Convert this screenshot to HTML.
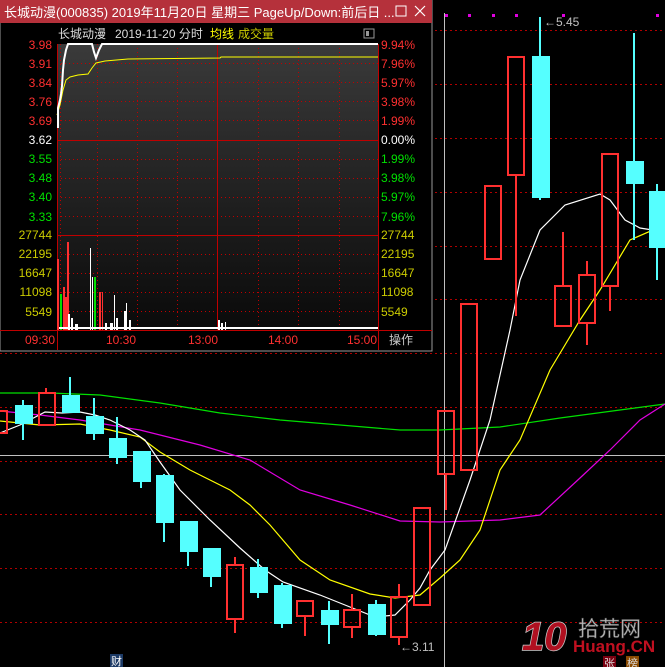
<!DOCTYPE html>
<html><head><meta charset="utf-8"><style>
html,body{margin:0;padding:0;background:#000;width:665px;height:667px;overflow:hidden}
svg{display:block}
text{font-family:"Liberation Sans","Noto Sans CJK SC",sans-serif}
</style></head><body>
<svg width="665" height="667" viewBox="0 0 665 667" xmlns="http://www.w3.org/2000/svg">
<rect width="665" height="667" fill="#000"/>
<g stroke="#b00000" stroke-dasharray="2,3" stroke-width="1">
<line x1="0" y1="30.5" x2="665" y2="30.5"/><line x1="0" y1="84.5" x2="665" y2="84.5"/>
<line x1="0" y1="138.5" x2="665" y2="138.5"/><line x1="0" y1="192.5" x2="665" y2="192.5"/>
<line x1="0" y1="246.5" x2="665" y2="246.5"/><line x1="0" y1="299.5" x2="665" y2="299.5"/>
<line x1="0" y1="353.5" x2="665" y2="353.5"/><line x1="0" y1="407.5" x2="665" y2="407.5"/>
<line x1="0" y1="461.5" x2="665" y2="461.5"/><line x1="0" y1="514.5" x2="665" y2="514.5"/>
<line x1="0" y1="568.5" x2="665" y2="568.5"/><line x1="0" y1="622.5" x2="665" y2="622.5"/>
</g>
<line x1="0" y1="455.5" x2="665" y2="455.5" stroke="#c0c0c0"/>
<line x1="444.5" y1="13" x2="444.5" y2="667" stroke="#c0c0c0"/>
<g fill="#e000e0"><rect x="445" y="14" width="3" height="3"/><rect x="468" y="14" width="3" height="3"/><rect x="492" y="14" width="3" height="3"/><rect x="515" y="14" width="3" height="3"/><rect x="562" y="14" width="3" height="3"/><rect x="656" y="14" width="3" height="3"/></g>
<!-- MA lines -->
<polyline fill="none" stroke="#00e000" stroke-width="1.2" points="0,393 50,393 100,395 160,403 220,413 280,420 340,425 400,430 440,430 500,427 560,418 620,410 665,404"/>
<polyline fill="none" stroke="#e000e0" stroke-width="1.2" points="0,411 40,415 80,420 140,430 200,445 250,460 300,490 350,505 400,521 440,522 500,520 540,515 580,478 610,450 640,420 665,404"/>
<polyline fill="none" stroke="#ffff00" stroke-width="1.2" points="0,421 40,425 80,424 110,430 140,437 160,452 190,470 230,490 250,505 270,525 300,560 330,580 370,594 395,598 420,595 440,578 460,560 480,530 500,470 520,440 550,370 580,320 600,290 630,240 660,227 665,226"/>
<polyline fill="none" stroke="#ffffff" stroke-width="1.2" points="0,433 20,425 45,412 62,413 80,412 95,415 110,420 130,430 145,440 160,462 180,490 210,520 240,548 265,570 283,582 320,595 345,605 375,617 395,615 410,600 420,588 430,570 445,550 470,480 490,420 510,330 520,280 540,230 565,205 600,194 610,200 625,220 640,228 665,232"/>
<!-- candles -->
<g stroke="#ff3030" stroke-width="2" fill="none">
<rect x="-3" y="411" width="10" height="22"/>
<line x1="46" y1="388" x2="46" y2="393"/><rect x="39" y="393" width="16" height="32"/>
<line x1="235" y1="557" x2="235" y2="565"/><line x1="235" y1="619" x2="235" y2="633"/><rect x="227" y="565" width="16" height="54"/>
<line x1="305" y1="616" x2="305" y2="636"/><rect x="297" y="601" width="16" height="15"/>
<line x1="352" y1="594" x2="352" y2="610"/><line x1="352" y1="627" x2="352" y2="638"/><rect x="344" y="610" width="16" height="17"/>
<line x1="399" y1="584" x2="399" y2="597"/><line x1="399" y1="637" x2="399" y2="645"/><rect x="391" y="597" width="16" height="40"/>
<rect x="414" y="508" width="16" height="97"/>
<line x1="446" y1="474" x2="446" y2="510"/><rect x="438" y="411" width="16" height="63"/>
<rect x="461" y="304" width="16" height="166"/>
<rect x="485" y="186" width="16" height="73"/>
<line x1="516" y1="175" x2="516" y2="316"/><rect x="508" y="57" width="16" height="118"/>
<line x1="563" y1="232" x2="563" y2="286"/><rect x="555" y="286" width="16" height="40"/>
<line x1="587" y1="261" x2="587" y2="275"/><line x1="587" y1="323" x2="587" y2="345"/><rect x="579" y="275" width="16" height="48"/>
<line x1="610" y1="286" x2="610" y2="311"/><rect x="602" y="154" width="16" height="132"/>
</g>
<g fill="#55ffff" stroke="#55ffff" stroke-width="2">
<line x1="23" y1="400" x2="23" y2="440"/><rect x="16" y="406" width="16" height="17"/>
<line x1="70" y1="377" x2="70" y2="412"/><rect x="63" y="396" width="16" height="16"/>
<line x1="94" y1="398" x2="94" y2="440"/><rect x="87" y="417" width="16" height="16"/>
<line x1="117" y1="417" x2="117" y2="464"/><rect x="110" y="439" width="16" height="18"/>
<line x1="141" y1="452" x2="141" y2="488"/><rect x="134" y="452" width="16" height="29"/>
<line x1="164" y1="474" x2="164" y2="542"/><rect x="157" y="476" width="16" height="46"/>
<line x1="188" y1="522" x2="188" y2="566"/><rect x="181" y="522" width="16" height="29"/>
<line x1="211" y1="549" x2="211" y2="587"/><rect x="204" y="549" width="16" height="27"/>
<line x1="258" y1="559" x2="258" y2="598"/><rect x="251" y="568" width="16" height="24"/>
<line x1="282" y1="583" x2="282" y2="628"/><rect x="275" y="586" width="16" height="37"/>
<line x1="329" y1="601" x2="329" y2="644"/><rect x="322" y="611" width="16" height="13"/>
<line x1="376" y1="600" x2="376" y2="636"/><rect x="369" y="605" width="16" height="29"/>
<line x1="540" y1="17" x2="540" y2="200"/><rect x="533" y="57" width="16" height="140"/>
<line x1="634" y1="33" x2="634" y2="240"/><rect x="627" y="162" width="16" height="21"/>
<line x1="657" y1="184" x2="657" y2="280"/><rect x="650" y="192" width="16" height="55"/>
</g>
<text x="544" y="26" fill="#c0c0c0" font-size="12">←5.45</text>
<text x="400" y="651" fill="#c0c0c0" font-size="12">←3.11</text>
<rect x="110" y="654" width="13" height="13" fill="#1c3a66"/><text x="111" y="665" fill="#fff" font-size="11">财</text>
<rect x="603" y="656" width="13" height="11" fill="#7a0010"/><text x="604" y="667" fill="#ddd" font-size="11">张</text>
<rect x="626" y="656" width="13" height="11" fill="#8a4a00"/><text x="627" y="667" fill="#ddd" font-size="11">榜</text>
<!-- logo -->
<text x="522" y="650" fill="#b01020" stroke="#ccc" stroke-width="1.5" font-size="40" font-weight="bold" font-style="italic" paint-order="stroke">10</text>
<text x="578" y="636" fill="#bbb" stroke="#555" stroke-width="0.5" font-size="21">拾荒网</text>
<text x="573" y="652" fill="#c01020" font-size="17" font-weight="bold">Huang.CN</text>
<!-- dialog -->
<rect x="0" y="0" width="432" height="351" fill="#000" stroke="#9a9a9a"/>
<rect x="0" y="0" width="432" height="23" fill="#b5313b"/>
<text x="4" y="17" fill="#fff" font-size="13">长城动漫(000835) 2019年11月20日 星期三 PageUp/Down:前后日 ...</text>
<rect x="396" y="6" width="10" height="10" fill="none" stroke="#fff"/>
<path d="M415 6 L425 16 M425 6 L415 16" stroke="#fff" stroke-width="1.2"/>
<text x="58" y="38" fill="#ddd" font-size="12">长城动漫</text>
<text x="115" y="38" fill="#ddd" font-size="12">2019-11-20 分时</text>
<text x="210" y="38" fill="#ffff00" font-size="12">均线</text>
<text x="238" y="38" fill="#cccc00" font-size="12">成交量</text>
<rect x="364" y="29" width="10" height="9" fill="none" stroke="#999"/><rect x="366" y="31" width="3" height="5" fill="#999"/>
<defs><linearGradient id="g" x1="0" y1="0" x2="0" y2="1"><stop offset="0" stop-color="#3a3a3a"/><stop offset="1" stop-color="#0a0a0a"/></linearGradient></defs>
<rect x="57" y="44" width="321" height="286" fill="url(#g)"/>
<g stroke="#c00000" stroke-dasharray="1,3">
<line x1="57" y1="63.5" x2="378" y2="63.5"/><line x1="57" y1="82.5" x2="378" y2="82.5"/><line x1="57" y1="101.5" x2="378" y2="101.5"/><line x1="57" y1="120.5" x2="378" y2="120.5"/>
<line x1="57" y1="159.5" x2="378" y2="159.5"/><line x1="57" y1="178.5" x2="378" y2="178.5"/><line x1="57" y1="197.5" x2="378" y2="197.5"/><line x1="57" y1="216.5" x2="378" y2="216.5"/>
<line x1="57" y1="254.5" x2="378" y2="254.5"/><line x1="57" y1="273.5" x2="378" y2="273.5"/><line x1="57" y1="292.5" x2="378" y2="292.5"/><line x1="57" y1="311.5" x2="378" y2="311.5"/>
<line x1="60.5" y1="44" x2="60.5" y2="330"/><line x1="97.5" y1="44" x2="97.5" y2="330"/><line x1="137.5" y1="44" x2="137.5" y2="330"/><line x1="177.5" y1="44" x2="177.5" y2="330"/>
<line x1="258.5" y1="44" x2="258.5" y2="330"/><line x1="298.5" y1="44" x2="298.5" y2="330"/><line x1="339.5" y1="44" x2="339.5" y2="330"/>
</g>
<g stroke="#c00000">
<line x1="57" y1="140.5" x2="378" y2="140.5"/><line x1="57" y1="235.5" x2="378" y2="235.5"/>
<line x1="217.5" y1="44" x2="217.5" y2="330"/>
<line x1="57.5" y1="44" x2="57.5" y2="350"/><line x1="378.5" y1="44" x2="378.5" y2="350"/>
<line x1="0" y1="330.5" x2="432" y2="330.5"/>
</g>
<!-- volume -->
<g fill="#ff3030"><rect x="57" y="259" width="2" height="71"/><rect x="63" y="287" width="2" height="43"/><rect x="67" y="242" width="2" height="88"/><rect x="64" y="297" width="3" height="33"/><rect x="99" y="292" width="2" height="38"/><rect x="102" y="292" width="1" height="38"/></g>
<g fill="#00e000"><rect x="60" y="294" width="2" height="36"/><rect x="94" y="277" width="2" height="53"/></g>
<g fill="#fff"><rect x="90" y="248" width="1" height="82"/><rect x="92" y="277" width="1" height="53"/><rect x="68" y="314" width="2" height="16"/><rect x="71" y="318" width="2" height="12"/><rect x="75" y="324" width="3" height="6"/><rect x="114" y="295" width="1" height="35"/><rect x="116" y="318" width="2" height="12"/><rect x="126" y="303" width="1" height="27"/><rect x="124" y="311" width="2" height="19"/><rect x="129" y="320" width="2" height="10"/><rect x="105" y="323" width="2" height="7"/><rect x="110" y="323" width="3" height="7"/><rect x="218" y="320" width="2" height="10"/><rect x="221" y="323" width="2" height="7"/><rect x="225" y="322" width="1" height="8"/><rect x="59" y="327" width="319" height="2"/></g>
<!-- price lines -->
<polyline fill="none" stroke="#ffff00" stroke-width="1" points="57,115 60,105 63,90 66,80 70,77 78,75 88,74 92,68 96,63 105,61 128,59 220,58 221,57 378,57"/>
<polyline fill="none" stroke="#fff" stroke-width="2" points="58,128 58,108 60,100 61,94 62,86 63,70 64,60 66,50 68,44 92,44 94,52 96,58 99,50 102,44 378,44"/>
<g font-size="12">
<g fill="#ff3030" text-anchor="end"><text x="52" y="49">3.98</text><text x="52" y="68">3.91</text><text x="52" y="87">3.84</text><text x="52" y="106">3.76</text><text x="52" y="125">3.69</text></g>
<text x="52" y="144" fill="#fff" text-anchor="end">3.62</text>
<g fill="#00e000" text-anchor="end"><text x="52" y="163">3.55</text><text x="52" y="182">3.48</text><text x="52" y="201">3.40</text><text x="52" y="221">3.33</text></g>
<g fill="#cccc00" text-anchor="end"><text x="52" y="239">27744</text><text x="52" y="258">22195</text><text x="52" y="277">16647</text><text x="52" y="296">11098</text><text x="52" y="316">5549</text></g>
<g fill="#ff3030"><text x="381" y="49">9.94%</text><text x="381" y="68">7.96%</text><text x="381" y="87">5.97%</text><text x="381" y="106">3.98%</text><text x="381" y="125">1.99%</text></g>
<text x="381" y="144" fill="#fff">0.00%</text>
<g fill="#00e000"><text x="381" y="163">1.99%</text><text x="381" y="182">3.98%</text><text x="381" y="201">5.97%</text><text x="381" y="221">7.96%</text></g>
<g fill="#cccc00"><text x="381" y="239">27744</text><text x="381" y="258">22195</text><text x="381" y="277">16647</text><text x="381" y="296">11098</text><text x="381" y="316">5549</text></g>
<g fill="#ff3030"><text x="25" y="344">09:30</text><text x="106" y="344">10:30</text><text x="188" y="344">13:00</text><text x="268" y="344">14:00</text><text x="347" y="344">15:00</text></g>
<text x="389" y="344" fill="#ccc">操作</text>
</g>
</svg>
</body></html>
